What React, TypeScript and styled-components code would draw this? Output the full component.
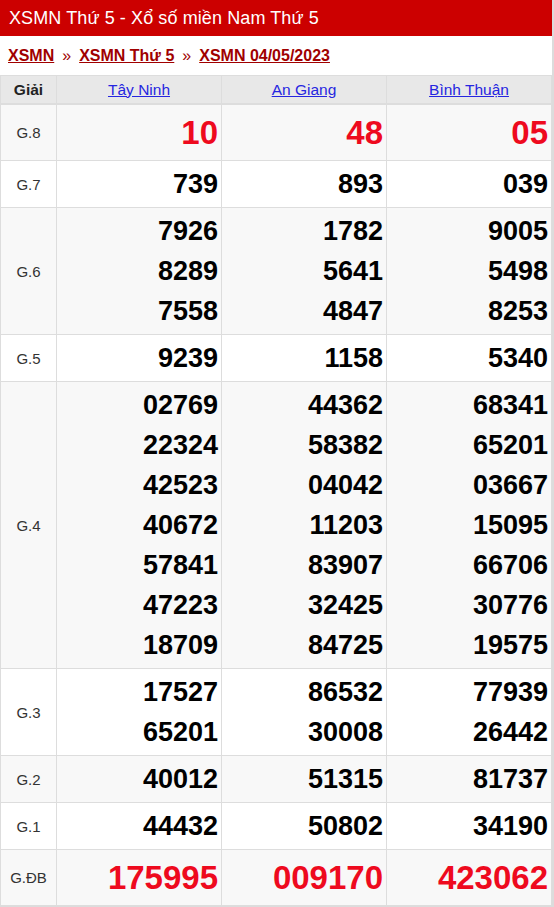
import React from "react";
import styled, { createGlobalStyle } from "styled-components";

const Global = createGlobalStyle`
  html, body { margin: 0; padding: 0; background: #dcdcdc; }
  body { font-family: "Liberation Sans", Arial, sans-serif; }
`;

const Page = styled.div`
  width: 552px;
  background: #fff;
`;

const Title = styled.h1`
  margin: 0;
  height: 36px;
  background: #cc0000;
  color: #fff;
  font-size: 18px;
  font-weight: normal;
  line-height: 36px;
  padding-left: 9px;
  letter-spacing: 0.1px;
`;

const Crumbs = styled.div`
  height: 39px;
  display: flex;
  align-items: center;
  padding-left: 8px;
  gap: 8px;
  font-size: 16px;
  font-weight: bold;
  color: #a00000;
`;

const Crumb = styled.a`
  color: #a00000;
  text-decoration: underline;
`;

const Sep = styled.span`
  color: #a00000;
  font-weight: normal;
  font-size: 16px;
`;

const Table = styled.table`
  width: 552px;
  border-collapse: collapse;
  table-layout: fixed;
  border: 1px solid #dddddd;
`;

const HeadCell = styled.th<{ $w?: number }>`
  width: ${(p) => (p.$w ? p.$w + "px" : "auto")};
  height: 27px;
  background: #e8e8e8;
  border: 1px solid #dddddd;
  border-bottom: 2px solid #dddddd;
  font-size: 15.5px;
  font-weight: ${(p) => (p.$w ? "bold" : "normal")};
  color: #222;
  padding: 0;
  text-align: center;
`;

const ProvLink = styled.a`
  color: #2626e0;
  text-decoration: underline;
`;

const Row = styled.tr<{ $alt: boolean }>`
  background: ${(p) => (p.$alt ? "#f8f8f8" : "#ffffff")};
`;

const Label = styled.td`
  border: 1px solid #dddddd;
  text-align: center;
  font-size: 15px;
  color: #333;
  padding: 0;
`;

const Cell = styled.td`
  border: 1px solid #dddddd;
  text-align: right;
  padding: 3px 3px 3px 0;
  vertical-align: middle;
`;

const Num = styled.div<{ $big: boolean }>`
  font-weight: bold;
  font-size: ${(p) => (p.$big ? "33px" : "27px")};
  line-height: ${(p) => (p.$big ? "49px" : "40px")};
  color: ${(p) => (p.$big ? "#ee0a1e" : "#000")};
`;

type Prize = { label: string; big?: boolean; values: string[][] };

const prizes: Prize[] = [
  { label: "G.8", big: true, values: [["10"], ["48"], ["05"]] },
  { label: "G.7", values: [["739"], ["893"], ["039"]] },
  {
    label: "G.6",
    values: [
      ["7926", "8289", "7558"],
      ["1782", "5641", "4847"],
      ["9005", "5498", "8253"],
    ],
  },
  { label: "G.5", values: [["9239"], ["1158"], ["5340"]] },
  {
    label: "G.4",
    values: [
      ["02769", "22324", "42523", "40672", "57841", "47223", "18709"],
      ["44362", "58382", "04042", "11203", "83907", "32425", "84725"],
      ["68341", "65201", "03667", "15095", "66706", "30776", "19575"],
    ],
  },
  {
    label: "G.3",
    values: [
      ["17527", "65201"],
      ["86532", "30008"],
      ["77939", "26442"],
    ],
  },
  { label: "G.2", values: [["40012"], ["51315"], ["81737"]] },
  { label: "G.1", values: [["44432"], ["50802"], ["34190"]] },
  { label: "G.ĐB", big: true, values: [["175995"], ["009170"], ["423062"]] },
];

const provinces = ["Tây Ninh", "An Giang", "Bình Thuận"];

export default function App() {
  return (
    <>
      <Global />
      <Page>
        <Title>XSMN Thứ 5 - Xổ số miền Nam Thứ 5</Title>
        <Crumbs>
          <Crumb href="#">XSMN</Crumb>
          <Sep>»</Sep>
          <Crumb href="#">XSMN Thứ 5</Crumb>
          <Sep>»</Sep>
          <Crumb href="#">XSMN 04/05/2023</Crumb>
        </Crumbs>
        <Table>
          <thead>
            <tr>
              <HeadCell $w={55}>Giải</HeadCell>
              {provinces.map((p) => (
                <HeadCell key={p}>
                  <ProvLink href="#">{p}</ProvLink>
                </HeadCell>
              ))}
            </tr>
          </thead>
          <tbody>
            {prizes.map((pr, i) => (
              <Row key={pr.label} $alt={i % 2 === 0}>
                <Label>{pr.label}</Label>
                {pr.values.map((col, j) => (
                  <Cell key={j}>
                    {col.map((v, k) => (
                      <Num key={k} $big={!!pr.big}>
                        {v}
                      </Num>
                    ))}
                  </Cell>
                ))}
              </Row>
            ))}
          </tbody>
        </Table>
      </Page>
    </>
  );
}
